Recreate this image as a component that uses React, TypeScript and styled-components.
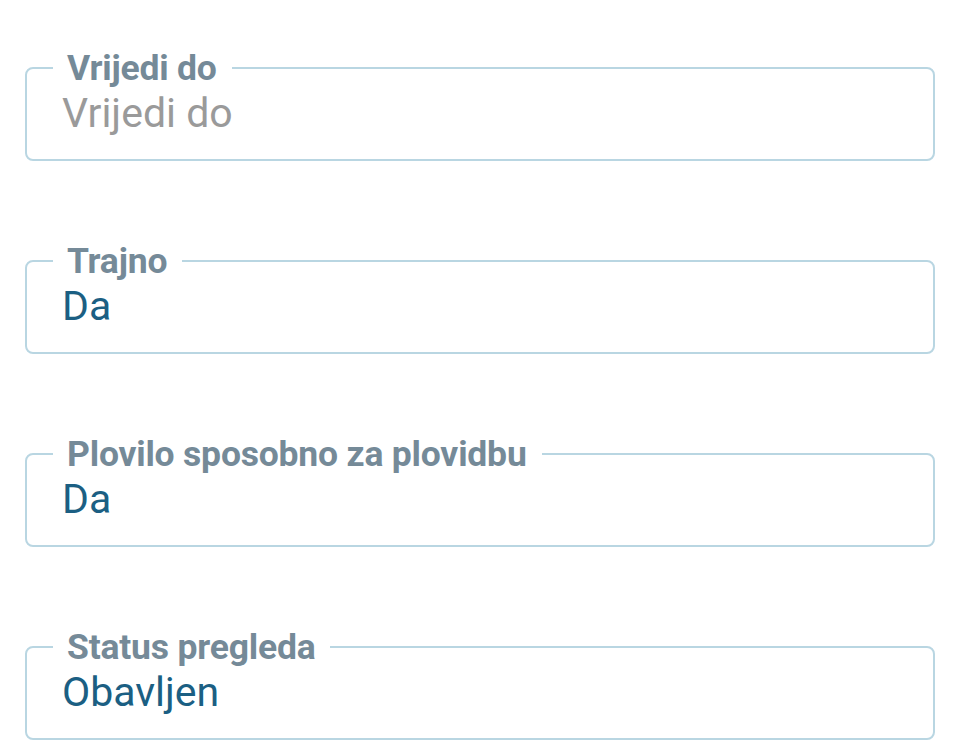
import styled, { createGlobalStyle } from "styled-components";

const GlobalStyle = createGlobalStyle`
  body {
    margin: 0;
    background: #ffffff;
    font-family: Roboto, "Liberation Sans", sans-serif;
  }
`;

const Page = styled.div`
  display: flex;
  flex-direction: column;
  gap: 85px;
  padding: 53px 23px 0 25px;
`;

const Field = styled.fieldset`
  margin: 0;
  padding: 0 0 22px 26px;
  border: 2px solid #b9d6e2;
  border-radius: 8px;
  min-width: 0;
`;

const Label = styled.legend`
  padding: 0 15px 0 14px;
  font-family: Roboto, "Liberation Sans", sans-serif;
  font-weight: 700;
  font-size: 35.5px;
  line-height: 30px;
  color: #758a98;
  letter-spacing: -0.2px;
`;

const Value = styled.div<{ empty?: boolean }>`
  margin-top: 6px;
  padding-left: 9px;
  font-family: Roboto, "Liberation Sans", sans-serif;
  font-size: 41px;
  line-height: 48px;
  color: ${({ empty }) => (empty ? "#9a9a9a" : "#1b5f83")};
`;

const fields = [
  { label: "Vrijedi do", value: "", placeholder: "Vrijedi do" },
  { label: "Trajno", value: "Da" },
  { label: "Plovilo sposobno za plovidbu", value: "Da" },
  { label: "Status pregleda", value: "Obavljen" },
];

export default function App() {
  return (
    <>
      <GlobalStyle />
      <Page>
        {fields.map((f) => (
          <Field key={f.label}>
            <Label>{f.label}</Label>
            <Value empty={!f.value}>{f.value || f.placeholder}</Value>
          </Field>
        ))}
      </Page>
    </>
  );
}
